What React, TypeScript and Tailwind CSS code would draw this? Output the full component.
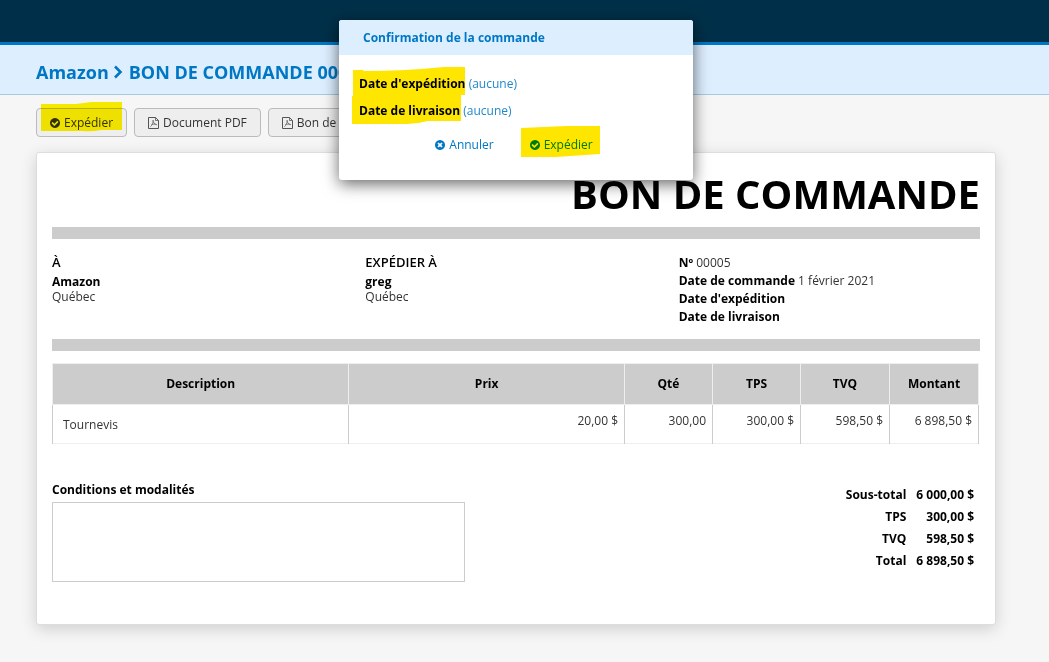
import React from 'react';

// ============================================
// ICONS
// ============================================

function CheckCircle() {
  return (
    <svg viewBox="128 128 1536 1536" className="h-2.5 w-2.5 shrink-0" fill="currentColor" aria-hidden="true">
      <path d="M1412 734q0-28-18-46l-91-90q-19-19-45-19t-45 19l-408 407-226-226q-19-19-45-19t-45 19l-91 90q-18 18-18 46 0 27 18 45l362 362q19 19 45 19 27 0 46-19l543-543q18-18 18-45zm252 162q0 209-103 385.5t-279.5 279.5-385.5 103-385.5-103-279.5-279.5-103-385.5 103-385.5 279.5-279.5 385.5-103 385.5 103 279.5 279.5 103 385.5z" />
    </svg>
  );
}

function TimesCircle() {
  return (
    <svg viewBox="128 128 1536 1536" className="h-2.5 w-2.5 shrink-0" fill="currentColor" aria-hidden="true">
      <path d="M1277 1122q0-26-19-45l-181-181 181-181q19-19 19-45 0-27-19-46l-90-90q-19-19-46-19-26 0-45 19l-181 181-181-181q-19-19-45-19-27 0-46 19l-90 90q-19 19-19 46 0 26 19 45l181 181-181 181q-19 19-19 45 0 27 19 46l90 90q19 19 46 19 26 0 45-19l181-181 181 181q19 19 45 19 27 0 46-19l90-90q19-19 19-46zm387-226q0 209-103 385.5t-279.5 279.5-385.5 103-385.5-103-279.5-279.5-103-385.5 103-385.5 279.5-279.5 385.5-103 385.5 103 279.5 279.5 103 385.5z" />
    </svg>
  );
}

function FilePdf() {
  return (
    <svg viewBox="0 0 11 12" className="h-3 w-[11px] shrink-0 text-[#555]" fill="none" stroke="currentColor" aria-hidden="true">
      <path d="M.5.5h7l3 3v8H.5z" strokeWidth="1" />
      <path d="M7.500.5v3h3" strokeWidth="0.8" />
      <path d="M5 3.200c.2 2.300 1.300 4 3.700 4.500M5.200 3.200C5.300 6 4 8.500 2.300 9.700M3.300 7.800c1.700-.8 3.500-.9 5.400-.3" strokeWidth="0.7" />
    </svg>
  );
}

function Chevron() {
  return (
    <svg viewBox="0 0 10 14" className="mr-1.5 ml-1 h-3.5 w-2.5" fill="none" stroke="currentColor" strokeWidth="2.6" aria-hidden="true">
      <path d="M2 1.500 7.500 7 2 12.500" />
    </svg>
  );
}

// Coup de surligneur
function Marker({ d, viewBox, className }: { d: string; viewBox: string; className: string }) {
  return (
    <svg viewBox={viewBox} className={`pointer-events-none absolute mix-blend-multiply ${className}`} aria-hidden="true">
      <path d={d} fill="currentColor" />
    </svg>
  );
}

// ============================================
// TOOLBAR
// ============================================

function ToolButton({ icon, children }: { icon: React.ReactNode; children: React.ReactNode }) {
  return (
    <button
      type="button"
      className="flex h-[29px] items-center gap-1 rounded-[4px] border border-[#bbb] bg-[#eee] px-[13px] text-xs text-[#333]"
    >
      {icon}
      {children}
    </button>
  );
}

// ============================================
// DOCUMENT
// ============================================

const totals = [
  { label: 'Sous-total', value: '6 000,00 $' },
  { label: 'TPS', value: '300,00 $' },
  { label: 'TVQ', value: '598,50 $' },
  { label: 'Total', value: '6 898,50 $' },
];

const columns = [
  { label: 'Description', width: 'w-[32%]' },
  { label: 'Prix', width: 'w-auto' },
  { label: 'Qté', width: 'w-[88px]' },
  { label: 'TPS', width: 'w-[88px]' },
  { label: 'TVQ', width: 'w-[89px]' },
  { label: 'Montant', width: 'w-[89px]' },
];

function Address({ title, name, place }: { title: string; name: string; place: string }) {
  return (
    <div>
      <h2 className="mb-1 text-[13px] leading-4 font-semibold text-black">{title}</h2>
      <p className="text-xs leading-[15px] font-bold text-black">{name}</p>
      <p className="text-xs leading-[15px]">{place}</p>
    </div>
  );
}

function OrderDocument() {
  return (
    <main className="mt-[15px] rounded-[3px] border border-[#ddd] bg-white px-[15px] pb-[42px] shadow-[0_4px_16px_rgba(0,0,20,0.16)]">
      <h1 className="pt-3 pb-1 text-right text-[40px] leading-[58px] font-bold text-black">BON DE COMMANDE</h1>
      <div className="h-3 bg-[#ccc]" />

      <section className="grid h-[100px] grid-cols-3 gap-x-3 pt-[15px]">
        <Address title="À" name="Amazon" place="Québec" />
        <Address title="EXPÉDIER À" name="greg" place="Québec" />
        <div className="text-xs leading-[18px]">
          <p><b className="font-bold text-black">Nº</b> 00005</p>
          <p><b className="font-bold text-black">Date de commande</b> 1 février 2021</p>
          <p><b className="font-bold text-black">Date d'expédition</b></p>
          <p><b className="font-bold text-black">Date de livraison</b></p>
        </div>
      </section>

      <div className="h-3 bg-[#ccc]" />

      <div className="mt-3 pr-px">
        <table className="w-full table-fixed border-collapse text-xs">
          <thead>
            <tr>
              {columns.map((c) => (
                <th key={c.label} className={`h-[41px] border border-[#eee] bg-[#ccc] font-bold text-black ${c.width}`}>
                  {c.label}
                </th>
              ))}
            </tr>
          </thead>
          <tbody>
            <tr className="h-[39px] border-b border-[#eee] text-right align-top leading-4 [&>td]:border-x [&>td]:border-x-[#ccc] [&>td]:px-1.5 [&>td]:pt-2">
              <td className="text-left"><span className="block pt-1 pl-1">Tournevis</span></td>
              <td>20,00 $</td>
              <td>300,00</td>
              <td>300,00 $</td>
              <td>598,50 $</td>
              <td>6 898,50 $</td>
            </tr>
          </tbody>
        </table>
      </div>

      <section className="mt-[38px] flex justify-between text-xs font-bold text-black">
        <div className="w-[413px]">
          <label htmlFor="terms" className="block leading-4">Conditions et modalités</label>
          <textarea id="terms" className="mt-1 block h-20 w-full resize-none border border-[#ccc] bg-white" />
        </div>
        <dl className="grid grid-cols-[auto_auto] content-start gap-x-2.5 pt-0.5 pr-1.5 text-right leading-[22px]">
          {totals.map((t) => (
            <React.Fragment key={t.label}>
              <dt>{t.label}</dt>
              <dd>{t.value}</dd>
            </React.Fragment>
          ))}
        </dl>
      </section>
    </main>
  );
}

// ============================================
// CONFIRMATION
// ============================================

function ConfirmDialog() {
  return (
    <div className="absolute inset-x-0 top-5 flex justify-center pr-[17px]">
      <div
        role="dialog"
        aria-labelledby="dialog-title"
        className="relative h-40 w-[354px] rounded-[3px] bg-white text-xs shadow-[0_4px_16px_rgba(0,0,0,0.6)]"
      >
        <h2 id="dialog-title" className="rounded-t-[3px] bg-[#def] px-6 leading-[35px] font-bold text-[#0077c5]">
          Confirmation de la commande
        </h2>
        <div className="px-5 pt-[15px] leading-[27px]">
          <p>
            <b className="font-bold text-black">Date d'expédition</b>{' '}
            <a href="#expedition" className="text-[#2288cc]">(aucune)</a>
          </p>
          <p>
            <b className="font-bold text-black">Date de livraison</b>{' '}
            <a href="#livraison" className="text-[#2288cc]">(aucune)</a>
          </p>
        </div>
        <div className="mt-[13px] flex justify-center gap-9 pr-1">
          <button type="button" className="flex items-center gap-1 text-[#0077c5]">
            <TimesCircle />
            Annuler
          </button>
          <button type="button" className="flex items-center gap-1 text-[#008800]">
            <CheckCircle />
            Expédier
          </button>
        </div>
        <Marker
          viewBox="0 0 114 57"
          className="top-[47px] left-[13px] h-[57px] w-[114px] text-[#ffe600]"
          d="M1 3H11L12 4Q50 4 81 1L92 0H113V28H109V54H76Q65 57 55 57H0V29H1Z"
        />
        <Marker
          viewBox="0 0 79 31"
          className="top-[106px] left-[182px] h-[31px] w-[79px] text-[#ffe600]"
          d="M0 2 45 0H79V28L35 31H0Z"
        />
      </div>
    </div>
  );
}

export default function App() {
  return (
    <div className="relative min-h-screen bg-[#f6f6f6] pb-9 font-['Open_Sans','Noto_Sans',sans-serif] text-[#333]">
      <div className="h-[45px] border-b-3 border-[#0077c5] bg-[#003049]" />
      <header className="flex h-[50px] items-center border-b border-[#a5cbe0] bg-[#def] pt-1 pl-9 text-lg font-bold text-[#0077c5]">
        Amazon
        <Chevron />
        BON DE COMMANDE 00005
      </header>
      <div className="mr-[53px] ml-9 pt-[13px]">
        <nav className="relative flex gap-[7px]">
          <ToolButton icon={<CheckCircle />}>Expédier</ToolButton>
          <ToolButton icon={<FilePdf />}>Document PDF</ToolButton>
          <ToolButton icon={<FilePdf />}>Bon de livraison</ToolButton>
          <Marker
            viewBox="0 0 81 30"
            className="-top-[6px] left-[5px] h-[30px] w-[81px] text-[#fff200]"
            d="M0 2H35L50 0H81V28H60Q50 30 42 29H0Z"
          />
        </nav>
        <OrderDocument />
      </div>
      <ConfirmDialog />
    </div>
  );
}
